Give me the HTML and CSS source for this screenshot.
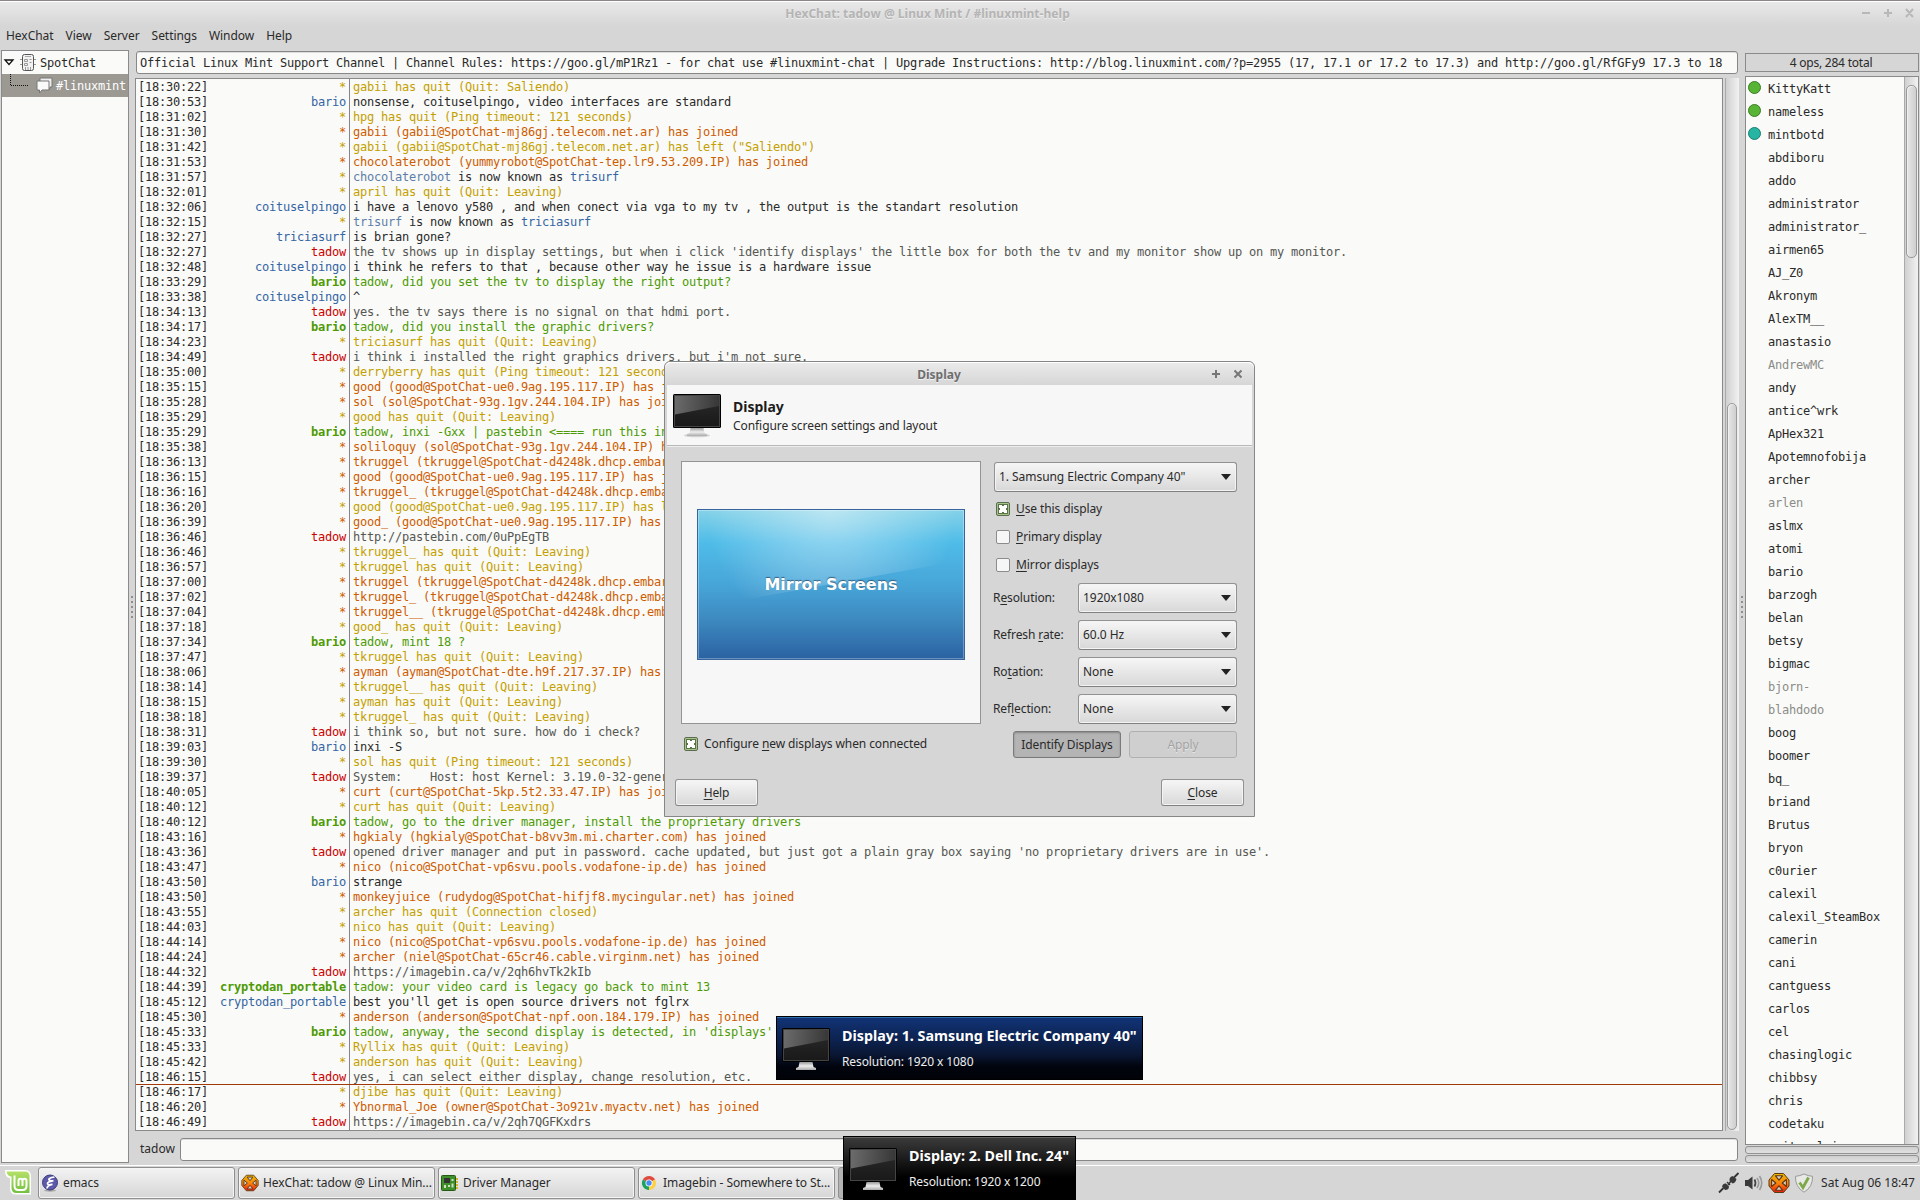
FILE: index.html
```html
<!DOCTYPE html>
<html lang="en">
<head>
  <meta charset="UTF-8">
  <title>HexChat: tadow @ Linux Mint / #linuxmint-help</title>
  <link rel="stylesheet" href="styles.css">
</head>
<body>
  <!-- Shared icons -->
  <svg class="defs" width="0" height="0">
    <defs>
      <linearGradient id="screen" x1="0" y1="0" x2="0" y2="1">
        <stop offset="0" stop-color="#2b2b2b"/><stop offset="1" stop-color="#191919"/>
      </linearGradient>
      <linearGradient id="glare" x1="0" y1="0" x2="1" y2="0">
        <stop offset="0" stop-color="#777"/><stop offset="1" stop-color="#3a3a3a"/>
      </linearGradient>
      <linearGradient id="stand" x1="0" y1="0" x2="0" y2="1">
        <stop offset="0" stop-color="#999"/><stop offset="0.5" stop-color="#eee"/><stop offset="1" stop-color="#aaa"/>
      </linearGradient>
      <linearGradient id="fire" x1="0" y1="0" x2="0" y2="1">
        <stop offset="0" stop-color="#e8b800"/><stop offset="0.5" stop-color="#fa860c"/><stop offset="1" stop-color="#e81b0c"/>
      </linearGradient>
      <linearGradient id="mint" x1="0" y1="0" x2="0" y2="1">
        <stop offset="0" stop-color="#b4e067"/><stop offset="1" stop-color="#75c043"/>
      </linearGradient>
    </defs>
    <symbol id="monitor" viewBox="0 0 48 44">
      <ellipse cx="24" cy="41.5" rx="13" ry="1.8" fill="#000" opacity="0.15"/>
      <path d="M17.5 34h13l1 5 2.500 1v2h-20v-2l2.500-1z" fill="url(#stand)"/>
      <rect x="0" y="0" width="48" height="34" rx="1.500" fill="#000"/>
      <rect x="1.500" y="1.500" width="45" height="31" fill="url(#screen)" stroke="#444"/>
      <path d="M2 2h44v10L2 20.500z" fill="url(#glare)" opacity="0.85"/>
    </symbol>
    <symbol id="hex" viewBox="0 0 22 22">
      <path d="M6.500 1.500h9L21 8v6l-5.500 6.500h-9L1 14V8z" fill="url(#fire)" stroke="#5a3a10" stroke-linejoin="round"/>
      <path d="M7.500 3.800h7L11 8.200zM7.500 18.200h7L11 13.800zM3.600 7.500v7L7.800 11zM18.400 7.500v7L14.200 11z" fill="#d9cfc4" stroke="#5e3312" stroke-width="1.100" stroke-linejoin="round"/>
    </symbol>
  </svg>

  <div class="titlebar">
    <span class="title">HexChat: tadow @ Linux Mint / #linuxmint-help</span>
    <svg class="win-buttons" width="54" height="10" viewBox="0 0 54 10">
      <path d="M1 5h8M23 5h8M27 1v8M45 1l7 8M52 1l-7 8" stroke="#b8b8b8" stroke-width="2"/>
    </svg>
  </div>
  <div class="menubar">
    <span>HexChat</span><span>View</span><span>Server</span><span>Settings</span><span>Window</span><span>Help</span>
  </div>

  <div class="main">
    <div class="tree">
      <div class="tree-row">
        <svg width="31" height="22" viewBox="0 0 31 22">
          <path d="M3 8h8L7 12.500z" fill="#fff" stroke="#111" stroke-width="1.300"/>
        </svg>
        <span class="server-name">SpotChat</span>
        <svg class="server-icon" width="16" height="17" viewBox="0 0 16 17">
          <path d="M0 5.500h16M0 10.500h16" stroke="#999"/>
          <rect x="2.500" y="0.500" width="11" height="16" rx="2" fill="#f2f2f2" stroke="#555"/>
          <path d="M5 2.500h6" stroke="#aaa"/>
          <path d="M4.500 5.500h3v2h-3zM9.500 8.500h2M4.500 9.500h3v2h-3zM9.500 5.500h2M5.500 13v3M8 13v3M10.500 13v3" stroke="#999" fill="none"/>
        </svg>
      </div>
      <div class="tree-row selected">
        <svg width="55" height="23" viewBox="0 0 55 23">
          <path d="M9.500 0v11.500H27" fill="none" stroke="#111" stroke-dasharray="1 1"/>
          <path d="M39 4h12v9h-2l-.5 3-2-2H39z" fill="#eee" stroke="#777"/>
          <path d="M36 7h12v9h-7l-2.500 3v-3H36z" fill="#fafafa" stroke="#777"/>
        </svg>
        <span>#linuxmint</span>
      </div>
    </div>

    <div class="handle"><i></i><i></i><i></i><i></i><i></i></div>

    <div class="center">
      <div class="topic">Official Linux Mint Support Channel | Channel Rules: https://goo.gl/mP1Rz1 - for chat use #linuxmint-chat | Upgrade Instructions: http://blog.linuxmint.com/?p=2955 (17, 17.1 or 17.2 to 17.3) and http://goo.gl/RfGFy9 17.3 to 18</div>
      <div class="chat-wrap">
        <div class="chat" id="chat"></div>
        <div class="scroll main-scroll"><div class="thumb"></div></div>
      </div>
      <div class="input-row">
        <span>tadow</span>
        <div class="input"></div>
      </div>
    </div>

    <div class="handle"><i></i><i></i><i></i><i></i><i></i></div>

    <div class="users">
      <div class="count">4 ops, 284 total</div>
      <div class="user-box">
        <div class="user-list" id="users"></div>
        <div class="scroll user-scroll"><div class="thumb"></div></div>
      </div>
      <div class="meter"></div>
      <div class="meter"></div>
    </div>
  </div>

  <div class="taskbar">
    <svg class="menu-logo" width="28" height="28" viewBox="0 0 28 28">
      <path d="M0 1h20q6 0 6 6v18.500H11q-6 0-6-6V9Q0 9 0 1z" fill="#fff"/>
      <path d="M1.500 2.500H20q4.500 0 4.500 4.500v17H11.500q-5 0-5-5V7.500q-4 0-5-5z" fill="url(#mint)"/>
      <path d="M9.500 6.500V17q0 4 4 4h4q4 0 4-4v-5q0-2.300-2-2.300t-2 2.300v5M17.500 12q0-2.300-2-2.300t-2 2.300v5" fill="none" stroke="#fff" stroke-width="2"/>
    </svg>
    <div class="task">
      <svg width="18" height="18" viewBox="0 0 18 18">
        <ellipse cx="9" cy="16.500" rx="6" ry="1.200" fill="#000" opacity="0.25"/>
        <circle cx="9" cy="8.500" r="7.500" fill="#5b59a8" stroke="#3d3b7c"/>
        <path d="M13.500 3Q7 4 8 5.700t4.500 1Q6 8 6.500 9.700t5 .6Q6 11.500 6 14.500" fill="none" stroke="#fff" stroke-width="1.700"/>
      </svg>
      <span>emacs</span>
    </div>
    <div class="task">
      <svg width="18" height="18"><use href="#hex"/></svg>
      <span>HexChat: tadow @ Linux Min...</span>
    </div>
    <div class="task">
      <svg width="18" height="18" viewBox="0 0 18 18">
        <rect x="0.500" y="1.500" width="14" height="15" rx="1" fill="#3f8f2a" stroke="#245c16"/>
        <rect x="3" y="4" width="6" height="5" fill="#333"/>
        <path d="M15 5h2M15 8h2M15 11h2M15 14h2" stroke="#d9b52c" stroke-width="2"/>
        <path d="M10.500 5h2v2h-2zM3 11h2v3H3zM7 11h2v2H7zM10.500 9.500h2v4h-2z" fill="#cfe0c4"/>
      </svg>
      <span>Driver Manager</span>
    </div>
    <div class="task">
      <svg width="18" height="18" viewBox="0 0 18 18">
        <path d="M8 9L1.900 5.500A7 7 0 0 1 14.100 5.500z" fill="#dd4b3e"/>
        <path d="M8 9l6.100-3.500A7 7 0 0 1 8 16z" fill="#fdd147"/>
        <path d="M8 9v7A7 7 0 0 1 1.900 5.500z" fill="#1ca261"/>
        <circle cx="8" cy="9" r="3.500" fill="#fff"/>
        <circle cx="8" cy="9" r="2.700" fill="#4b8bf4"/>
      </svg>
      <span>Imagebin - Somewhere to St...</span>
    </div>
    <div class="task active"></div>
    <div class="tray">
      <svg width="22" height="22" viewBox="0 0 22 22">
        <path d="M1 20.500l4.500-4.500M20.500 1L16 5.500" stroke="#333" stroke-width="1.800"/>
        <path d="M4 14.500q1-3.500 4-3l3 3q0 3.500-4 3.500zM11.500 8.500q-.5-3.500 3-4.500l4 3q-1 4-4 4.500z" fill="#3a3a3a"/>
        <path d="M9 10l3 3M10 13l3-4" stroke="#3a3a3a" stroke-width="1.500"/>
      </svg>
      <svg width="20" height="18" viewBox="0 0 20 18">
        <path d="M1 6h3l4.500-3.500v13L4 12H1z" fill="#3a3a3a"/>
        <path d="M10.500 5.500q2 3.500 0 7" fill="none" stroke="#444" stroke-width="1.700"/>
        <path d="M13 4q3.500 5 0 10M15.500 2q4.500 7 0 14" fill="none" stroke="#999" stroke-width="1.600"/>
      </svg>
      <svg width="22" height="22"><use href="#hex"/></svg>
      <svg width="20" height="20" viewBox="0 0 20 20">
        <path d="M10 1q4 2 8.500 2.300Q19 14 10 19.200Q1 14 1.500 3.300Q6 3 10 1z" fill="#e8e8e4" stroke="#999"/>
        <path d="M5.500 9.500l3.500 5L14.500 4.500" fill="none" stroke="#7da84c" stroke-width="2.800"/>
      </svg>
      <span class="clock">Sat Aug 06 18:47</span>
    </div>
  </div>

  <!-- Display settings window -->
  <div class="dialog">
    <div class="dialog-title">
      <span>Display</span>
      <svg class="dialog-buttons" width="32" height="10" viewBox="0 0 32 10">
        <path d="M1 5h8M5 1v8M23.500 1.500l7 7M30.500 1.500l-7 7" stroke="#777" stroke-width="2"/>
      </svg>
    </div>
    <div class="dialog-head">
      <svg width="48" height="44"><use href="#monitor"/></svg>
      <div>
        <h1>Display</h1>
        <p>Configure screen settings and layout</p>
      </div>
    </div>
    <div class="dialog-body">
      <div class="preview">
        <div class="screen">
          <svg class="screen-glare" width="266" height="149" viewBox="0 0 266 149">
            <defs>
              <radialGradient id="shine" gradientUnits="userSpaceOnUse" cx="133" cy="0" r="125">
                <stop offset="0" stop-color="#fff" stop-opacity="0.450"/>
                <stop offset="1" stop-color="#fff" stop-opacity="0"/>
              </radialGradient>
            </defs>
            <path d="M0 0h266v50L0 98z" fill="url(#shine)"/>
          </svg>
          <b>Mirror Screens</b>
        </div>
      </div>
      <div class="settings">
        <div class="combo">1. Samsung Electric Company 40"</div>
        <div class="check"><i class="box on"></i><span><u>U</u>se this display</span></div>
        <div class="check"><i class="box"></i><span><u>P</u>rimary display</span></div>
        <div class="check"><i class="box"></i><span><u>M</u>irror displays</span></div>
        <div class="fields">
          <label>R<u>e</u>solution:</label><div class="combo">1920x1080</div>
          <label>Refresh <u>r</u>ate:</label><div class="combo">60.0 Hz</div>
          <label>Ro<u>t</u>ation:</label><div class="combo">None</div>
          <label>Ref<u>l</u>ection:</label><div class="combo">None</div>
        </div>
      </div>
    </div>
    <div class="dialog-actions">
      <div class="check"><i class="box on"></i><span>Configure <u>n</u>ew displays when connected</span></div>
      <div class="btn pressed">Identify Displays</div>
      <div class="btn disabled">Apply</div>
    </div>
    <div class="dialog-foot">
      <div class="btn"><span><u>H</u>elp</span></div>
      <div class="btn"><span><u>C</u>lose</span></div>
    </div>
  </div>

  <!-- Labels shown by "Identify Displays" -->
  <div class="osd blue">
    <svg width="48" height="44"><use href="#monitor"/></svg>
    <div>
      <strong>Display: 1. Samsung Electric Company 40"</strong>
      <span>Resolution: 1920 x 1080</span>
    </div>
  </div>
  <div class="osd black">
    <svg width="48" height="44"><use href="#monitor"/></svg>
    <div>
      <strong>Display: 2. Dell Inc. 24"</strong>
      <span>Resolution: 1920 x 1200</span>
    </div>
  </div>

  <script src="script.js"></script>
</body>
</html>
```
FILE: styles.css
```css
/* General */
* {
  box-sizing: border-box;
}

body {
  margin: 0;
  width: 1920px;
  height: 1200px;
  overflow: hidden;
  position: relative;
  display: flex;
  flex-direction: column;
  background: #d6d6d6;
  color: #2a2a2a;
  font-family: "Noto Sans", sans-serif;
  font-size: 12px;
  letter-spacing: -0.1px;
  line-height: 16px;
}

svg {
  display: block;
  flex: none;
}

.defs {
  position: absolute;
}

u {
  text-underline-offset: 2px;
  text-decoration-skip-ink: none;
}

/* Title and menu */
.titlebar {
  height: 26px;
  flex: none;
  display: flex;
  align-items: center;
  position: relative;
  border-top: 1px solid #8c8688;
  box-shadow: inset 0 1px #fff;
  background: linear-gradient(#e9e9e9, #d6d6d6);
}

.title {
  width: 1855px;
  text-align: center;
  font-weight: bold;
  letter-spacing: 0.04px;
  color: #b4b4b4;
  text-shadow: 0 1px #eee;
}

.win-buttons {
  position: absolute;
  right: 5px;
  top: 7px;
}

.menubar {
  height: 24px;
  flex: none;
  display: flex;
  align-items: center;
  gap: 12px;
  padding: 0 0 5px 6px;
  letter-spacing: -0.04px;
}

/* Main area */
.main {
  height: 1113px;
  flex: none;
  display: flex;
  padding: 0 1px;
  font-family: "DejaVu Sans Mono", monospace;
  letter-spacing: -0.224px;
}

.tree {
  width: 128px;
  flex: none;
  border: 1px solid #8a8a8a;
  background: #fafaf8;
  overflow: hidden;
}

.tree-row {
  height: 23px;
  display: flex;
  align-items: center;
  position: relative;
  white-space: nowrap;
}

.server-name {
  margin-left: 7px;
}

.tree-row .server-icon {
  position: absolute;
  left: 18px;
  top: 3px;
}

.selected {
  background: #9b9992;
  color: #fff;
}

.selected svg {
  margin-left: -1px;
}

.handle {
  width: 6px;
  flex: none;
  display: flex;
  flex-direction: column;
  align-items: center;
  justify-content: center;
  gap: 3px;
}

.handle i {
  width: 2px;
  height: 2px;
  background: #8f8f8f;
}

/* Chat */
.center {
  width: 1604px;
  flex: none;
  display: flex;
  flex-direction: column;
}

.topic {
  height: 23px;
  margin: 1px 1px 4px 1px;
  padding: 0 3px;
  line-height: 22px;
  white-space: nowrap;
  overflow: hidden;
  border: 1px solid #878787;
  border-radius: 3px;
  background: #fafaf8;
  box-shadow: inset 0 1px #ddd;
}

.chat-wrap {
  height: 1053px;
  display: flex;
  justify-content: space-between;
}

.chat {
  width: 1588px;
  padding-top: 1px;
  border: 1px solid #8a8a8a;
  background: linear-gradient(90deg, transparent 213px, #85838f 213px, #85838f 214px, transparent 214px) #fafaf8;
  overflow: hidden;
}

.line {
  height: 15px;
  line-height: 15px;
  display: flex;
  padding-left: 2px;
  white-space: pre;
}

.line.marker {
  box-shadow: inset 0 -1px #a03a08;
}

.time {
  width: 70px;
}

.nick {
  width: 138px;
  text-align: right;
  color: #3465a4;
}

.text {
  margin-left: 7px;
}

.quit .nick, .quit .text, .rename .nick { color: #c4a000; }
.join .nick, .join .text { color: #ce5c00; }
.own .nick { color: #cc0000; }
.own .text { color: #555753; }
.hilight .nick { color: #4e9a06; font-weight: bold; }
.hilight .text { color: #4e9a06; }
.rename .old { color: #5c7ea8; }
.rename .new { color: #3465a4; }

.scroll {
  border-left: 1px solid #aaa;
  background: linear-gradient(90deg, #d0d0d0, #f2f2f2);
}

.thumb {
  border: 1px solid #999;
  border-radius: 5px;
  background: linear-gradient(90deg, #e6e6e6, #cfcfcf);
  box-shadow: inset 1px 1px #f0f0f0;
}

.main-scroll {
  width: 14px;
  padding: 325px 2px 1px 1px;
}

.main-scroll .thumb {
  height: 100%;
}

.input-row {
  height: 32px;
  display: flex;
  align-items: center;
  padding: 3px 1px 0 5px;
  font-family: "Noto Sans", sans-serif;
  letter-spacing: 0;
}

.input-row span {
  width: 40px;
  margin-top: 1px;
}

.input {
  flex: 1;
  height: 23px;
  margin-top: 2px;
  border: 1px solid #878787;
  border-radius: 3px;
  background: #fafaf8;
  box-shadow: inset 0 1px #ddd;
}

/* User list */
.users {
  width: 174px;
  flex: none;
}

.count {
  height: 19px;
  margin: 3px 0 4px;
  padding-right: 2px;
  line-height: 17px;
  text-align: center;
  font-family: "Noto Sans", sans-serif;
  border: 1px solid #8a8a8a;
}

.user-box {
  height: 1069px;
  display: flex;
  border: 1px solid #8a8a8a;
  background: #fafaf8;
  overflow: hidden;
}

.user-list {
  flex: 1;
}

.user {
  height: 23px;
  display: flex;
  align-items: center;
  padding-left: 2px;
}

.dot {
  width: 13px;
  height: 13px;
  margin: 0 7px 2px 0;
  border-radius: 50%;
}

.op { background: #58b435; border: 1px solid #3b7c24; }
.voice { background: #26b5a3; border: 1px solid #1b7c70; }
.away { color: #8b8d88; }

.user-scroll {
  width: 14px;
  padding: 8px 1px 0 1px;
}

.user-scroll .thumb {
  height: 173px;
}

.meter {
  height: 8px;
  margin-top: 1px;
  border: 1px solid #929292;
  border-radius: 3px;
  background: linear-gradient(#cfcfcf, #e0e0e0);
}

/* Taskbar */
.taskbar {
  flex: 1;
  display: flex;
  align-items: center;
  gap: 3px;
  margin-top: 2px;
  padding-left: 5px;
  border-top: 1px solid #fff;
}

.menu-logo {
  margin-right: 2px;
}

.task {
  width: 197px;
  height: 32px;
  display: flex;
  align-items: center;
  gap: 4px;
  padding: 0 2px;
  border: 1px solid #8f8f8f;
  border-radius: 3px;
  background: linear-gradient(#f3f3f3, #d6d6d6);
  box-shadow: inset 0 0 0 1px #f5f5f5;
  white-space: nowrap;
}

.task span {
  letter-spacing: -0.07px;
}

.task.active {
  background: #b4b4b4;
  box-shadow: none;
}

.tray {
  margin-left: auto;
  display: flex;
  align-items: center;
  gap: 4px;
  padding-right: 5px;
}

.clock {
  margin-left: 3px;
  letter-spacing: 0;
}

/* Dialog */
.dialog {
  position: absolute;
  left: 664px;
  top: 361px;
  width: 591px;
  height: 456px;
  border: 1px solid #868686;
  border-radius: 6px 6px 0 0;
  background: #d6d6d6;
  box-shadow: inset 0 1px #fff;
}

.dialog-title {
  height: 23px;
  display: flex;
  align-items: center;
  justify-content: center;
  position: relative;
  padding: 2px 41px 0 0;
  border-radius: 6px 6px 0 0;
  background: linear-gradient(#ebebeb, #d6d6d6);
  box-shadow: inset 0 1px #fff;
  font-weight: bold;
  letter-spacing: 0;
  color: #6e6e6e;
  text-shadow: 0 1px #f2f2f2;
}

.dialog-buttons {
  position: absolute;
  right: 11px;
  top: 7px;
}

.dialog-head {
  height: 61px;
  margin: 0 2px;
  display: flex;
  gap: 12px;
  padding: 9px 6px;
  background: #f7f7f7;
  border-bottom: 1px solid #b8b8b8;
  box-shadow: 0 1px #eee;
}

.dialog-head h1 {
  margin: 4px 0 2px;
  font-size: 14px;
  line-height: 18px;
  letter-spacing: 0;
  color: #1c1c1c;
}

.dialog-head p {
  margin: 0;
  letter-spacing: -0.07px;
}

.dialog-body {
  display: flex;
  gap: 12px;
  padding: 15px 17px 0 16px;
}

.preview {
  width: 300px;
  height: 263px;
  flex: none;
  padding: 47px 0 0 15px;
  border: 1px solid #949494;
  background: #f7f7f7;
}

.screen {
  width: 268px;
  height: 151px;
  display: flex;
  align-items: center;
  justify-content: center;
  position: relative;
  border: 1px solid #35659c;
  background: linear-gradient(#85d2e8, #4fbce8 22%, #47a5d8 50%, #3d8ac0 73%, #2b62a2);
  box-shadow: inset 0 0 0 1px rgba(255, 255, 255, 0.3);
}

.screen-glare {
  position: absolute;
  left: 0;
  top: 0;
}

.screen b {
  position: relative;
  font: bold 16px "DejaVu Sans", sans-serif;
  letter-spacing: 0;
  color: #fff;
  text-shadow: 0 -1px 1px #345f80;
}

.settings {
  width: 244px;
  flex: none;
  padding-top: 1px;
}

.combo {
  height: 30px;
  display: flex;
  align-items: center;
  justify-content: space-between;
  padding: 0 5px 0 4px;
  border: 1px solid #929292;
  border-bottom-color: #808080;
  border-radius: 3px;
  background: linear-gradient(#f6f6f6, #d8d8d8);
  box-shadow: inset 0 0 0 1px #f4f4f4;
  letter-spacing: -0.05px;
}

.combo::after {
  content: "";
  border: 5px solid transparent;
  border-top: 6px solid #222;
  border-bottom: 0;
}

.settings > .combo {
  margin: 0 0 3px 1px;
}

.check {
  height: 28px;
  display: flex;
  align-items: center;
  gap: 6px;
  padding-left: 3px;
}

.box {
  width: 14px;
  height: 14px;
  border: 1px solid #8c8c8c;
  border-radius: 2px;
  background: #f6f6f6;
}

.box.on {
  display: flex;
  align-items: center;
  justify-content: center;
  border-color: #5e6a55;
  background: #a3c683;
}

.box.on::after {
  content: "";
  width: 8px;
  height: 8px;
  border: 1px solid #5a7348;
  background:
    linear-gradient(#5a7348, #5a7348) 50% 0 / 2px 1px no-repeat,
    linear-gradient(#5a7348, #5a7348) 50% 100% / 2px 1px no-repeat,
    linear-gradient(#5a7348, #5a7348) 0 50% / 1px 2px no-repeat,
    linear-gradient(#5a7348, #5a7348) 100% 50% / 1px 2px no-repeat,
    #fff;
}

.fields {
  display: grid;
  grid-template-columns: 78px 159px;
  column-gap: 7px;
  row-gap: 7px;
  align-items: center;
  padding-top: 4px;
}

.dialog-actions {
  display: flex;
  gap: 8px;
  padding: 7px 17px 0 16px;
}

.dialog-actions .check {
  width: 324px;
  height: 26px;
}

.btn {
  width: 83px;
  height: 27px;
  display: flex;
  align-items: center;
  justify-content: center;
  border: 1px solid #929292;
  border-bottom-color: #808080;
  border-radius: 3px;
  background: linear-gradient(#f6f6f6, #d8d8d8);
  box-shadow: inset 0 0 0 1px #f4f4f4;
}

.dialog-actions .btn {
  width: 108px;
}

.btn.pressed {
  border-color: #7a7a7a;
  background: #b4b4b4;
  box-shadow: inset 0 1px 2px #888;
}

.btn.disabled {
  border-color: #b0b0b0;
  background: #cfcfcf;
  box-shadow: none;
  color: #a2a2a2;
  text-shadow: 0 1px #e8e8e8;
}

.dialog-foot {
  display: flex;
  justify-content: space-between;
  padding: 21px 10px 0;
}

/* Monitor labels */
.osd {
  position: absolute;
  height: 64px;
  display: flex;
  gap: 12px;
  padding: 10px 5px;
  color: #eee;
  border: 1px solid #000;
  white-space: nowrap;
}

.osd svg {
  margin-top: 1px;
}

.osd strong, .osd span {
  display: block;
}

.osd strong {
  margin-bottom: 9px;
  font-size: 14.3px;
  line-height: 18px;
  letter-spacing: 0;
  color: #fff;
}

.osd.blue {
  left: 776px;
  top: 1016px;
  width: 367px;
  background: linear-gradient(#113478, #0a1735 60%, #01040d 80%, #010308);
  box-shadow: inset 0 1px #2f6db0;
}

.osd.black {
  left: 843px;
  top: 1136px;
  width: 233px;
  background: linear-gradient(#3c3c3c, #171717 40%, #000 65%);
  box-shadow: inset 0 1px #666;
}
```
FILE: script.js
```js
// kinds: q = quit/part, j = join, m = message, o = own message, h = highlight, r = rename
const lines = [
  ["18:30:22", "q", "gabii has quit (Quit: Saliendo)"],
  ["18:30:53", "m", "nonsense, coituselpingo, video interfaces are standard", "bario"],
  ["18:31:02", "q", "hpg has quit (Ping timeout: 121 seconds)"],
  ["18:31:30", "j", "gabii (gabii@SpotChat-mj86gj.telecom.net.ar) has joined"],
  ["18:31:42", "q", "gabii (gabii@SpotChat-mj86gj.telecom.net.ar) has left (\"Saliendo\")"],
  ["18:31:53", "j", "chocolaterobot (yummyrobot@SpotChat-tep.lr9.53.209.IP) has joined"],
  ["18:31:57", "r", "chocolaterobot", "trisurf"],
  ["18:32:01", "q", "april has quit (Quit: Leaving)"],
  ["18:32:06", "m", "i have a lenovo y580 , and when conect via vga to my tv , the output is the standart resolution", "coituselpingo"],
  ["18:32:15", "r", "trisurf", "triciasurf"],
  ["18:32:27", "m", "is brian gone?", "triciasurf"],
  ["18:32:27", "o", "the tv shows up in display settings, but when i click 'identify displays' the little box for both the tv and my monitor show up on my monitor."],
  ["18:32:48", "m", "i think he refers to that , because other way he issue is a hardware issue", "coituselpingo"],
  ["18:33:29", "h", "tadow, did you set the tv to display the right output?", "bario"],
  ["18:33:38", "m", "^", "coituselpingo"],
  ["18:34:13", "o", "yes. the tv says there is no signal on that hdmi port."],
  ["18:34:17", "h", "tadow, did you install the graphic drivers?", "bario"],
  ["18:34:23", "q", "triciasurf has quit (Quit: Leaving)"],
  ["18:34:49", "o", "i think i installed the right graphics drivers, but i'm not sure."],
  ["18:35:00", "q", "derryberry has quit (Ping timeout: 121 seconds)"],
  ["18:35:15", "j", "good (good@SpotChat-ue0.9ag.195.117.IP) has joined"],
  ["18:35:28", "j", "sol (sol@SpotChat-93g.1gv.244.104.IP) has joined"],
  ["18:35:29", "q", "good has quit (Quit: Leaving)"],
  ["18:35:29", "h", "tadow, inxi -Gxx | pastebin <==== run this in terminal", "bario"],
  ["18:35:38", "j", "soliloquy (sol@SpotChat-93g.1gv.244.104.IP) has joined"],
  ["18:36:13", "j", "tkruggel (tkruggel@SpotChat-d4248k.dhcp.embarqhsd.net) has joined"],
  ["18:36:15", "j", "good (good@SpotChat-ue0.9ag.195.117.IP) has joined"],
  ["18:36:16", "j", "tkruggel_ (tkruggel@SpotChat-d4248k.dhcp.embarqhsd.net) has joined"],
  ["18:36:20", "q", "good (good@SpotChat-ue0.9ag.195.117.IP) has left"],
  ["18:36:39", "j", "good_ (good@SpotChat-ue0.9ag.195.117.IP) has joined"],
  ["18:36:46", "o", "http://pastebin.com/0uPpEgTB"],
  ["18:36:46", "q", "tkruggel_ has quit (Quit: Leaving)"],
  ["18:36:57", "q", "tkruggel has quit (Quit: Leaving)"],
  ["18:37:00", "j", "tkruggel (tkruggel@SpotChat-d4248k.dhcp.embarqhsd.net) has joined"],
  ["18:37:02", "j", "tkruggel_ (tkruggel@SpotChat-d4248k.dhcp.embarqhsd.net) has joined"],
  ["18:37:04", "j", "tkruggel__ (tkruggel@SpotChat-d4248k.dhcp.embarqhsd.net) has joined"],
  ["18:37:18", "q", "good_ has quit (Quit: Leaving)"],
  ["18:37:34", "h", "tadow, mint 18 ?", "bario"],
  ["18:37:47", "q", "tkruggel has quit (Quit: Leaving)"],
  ["18:38:06", "j", "ayman (ayman@SpotChat-dte.h9f.217.37.IP) has joined"],
  ["18:38:14", "q", "tkruggel__ has quit (Quit: Leaving)"],
  ["18:38:15", "q", "ayman has quit (Quit: Leaving)"],
  ["18:38:18", "q", "tkruggel_ has quit (Quit: Leaving)"],
  ["18:38:31", "o", "i think so, but not sure. how do i check?"],
  ["18:39:03", "m", "inxi -S", "bario"],
  ["18:39:30", "q", "sol has quit (Ping timeout: 121 seconds)"],
  ["18:39:37", "o", "System:    Host: host Kernel: 3.19.0-32-generic x86_64 (64 bit)"],
  ["18:40:05", "j", "curt (curt@SpotChat-5kp.5t2.33.47.IP) has joined"],
  ["18:40:12", "q", "curt has quit (Quit: Leaving)"],
  ["18:40:12", "h", "tadow, go to the driver manager, install the proprietary drivers", "bario"],
  ["18:43:16", "j", "hgkialy (hgkialy@SpotChat-b8vv3m.mi.charter.com) has joined"],
  ["18:43:36", "o", "opened driver manager and put in password. cache updated, but just got a plain gray box saying 'no proprietary drivers are in use'."],
  ["18:43:47", "j", "nico (nico@SpotChat-vp6svu.pools.vodafone-ip.de) has joined"],
  ["18:43:50", "m", "strange", "bario"],
  ["18:43:50", "j", "monkeyjuice (rudydog@SpotChat-hifjf8.mycingular.net) has joined"],
  ["18:43:55", "q", "archer has quit (Connection closed)"],
  ["18:44:03", "q", "nico has quit (Quit: Leaving)"],
  ["18:44:14", "j", "nico (nico@SpotChat-vp6svu.pools.vodafone-ip.de) has joined"],
  ["18:44:24", "j", "archer (niel@SpotChat-65cr46.cable.virginm.net) has joined"],
  ["18:44:32", "o", "https://imagebin.ca/v/2qh6hvTk2kIb"],
  ["18:44:39", "h", "tadow: your video card is legacy go back to mint 13", "cryptodan_portable"],
  ["18:45:12", "m", "best you'll get is open source drivers not fglrx", "cryptodan_portable"],
  ["18:45:30", "j", "anderson (anderson@SpotChat-npf.oon.184.179.IP) has joined"],
  ["18:45:33", "h", "tadow, anyway, the second display is detected, in 'displays'", "bario"],
  ["18:45:33", "q", "Ryllix has quit (Quit: Leaving)"],
  ["18:45:42", "q", "anderson has quit (Quit: Leaving)"],
  ["18:46:15", "o", "yes, i can select either display, change resolution, etc."],
  ["18:46:17", "q", "djibe has quit (Quit: Leaving)"],
  ["18:46:20", "j", "Ybnormal_Joe (owner@SpotChat-3o921v.myactv.net) has joined"],
  ["18:46:49", "o", "https://imagebin.ca/v/2qh7QGFKxdrs"]
];

const kinds = { q: "quit", j: "join", m: "message", o: "own", h: "hilight", r: "rename" };
const ops = ["KittyKatt", "nameless"];
const voices = ["mintbotd"];
const away = ["AndrewMC", "arlen", "bjorn-", "blahdodo"];
const users = ("KittyKatt nameless mintbotd abdiboru addo administrator administrator_ airmen65 AJ_Z0 Akronym " +
  "AlexTM__ anastasio AndrewMC andy antice^wrk ApHex321 Apotemnofobija archer arlen aslmx atomi bario barzogh " +
  "belan betsy bigmac bjorn- blahdodo boog boomer bq_ briand Brutus bryon c0urier calexil calexil_SteamBox " +
  "camerin cani cantguess carlos cel chasinglogic chibbsy chris codetaku coituselpingo").split(" ");

function span(cls, text) {
  const el = document.createElement("span");
  el.className = cls;
  el.textContent = text;
  return el;
}

const chat = document.getElementById("chat");
lines.forEach(([time, kind, text, who]) => {
  const line = document.createElement("div");
  line.className = "line " + kinds[kind];
  // last read position
  if (time === "18:46:15") line.classList.add("marker");

  let nick = who || "*";
  if (kind === "o") nick = "tadow";
  if (kind === "r") nick = "*";

  const body = span("text", kind === "r" ? "" : text);
  if (kind === "r") {
    body.append(span("old", text), " is now known as ", span("new", who));
  }
  line.append(span("time", "[" + time + "]"), span("nick", nick), body);
  chat.append(line);
});

const list = document.getElementById("users");
users.forEach(name => {
  const row = document.createElement("div");
  row.className = "user";
  if (away.includes(name)) row.classList.add("away");
  let mark = "dot";
  if (ops.includes(name)) mark += " op";
  if (voices.includes(name)) mark += " voice";
  row.append(span(mark, ""), span("name", name));
  list.append(row);
});
```
